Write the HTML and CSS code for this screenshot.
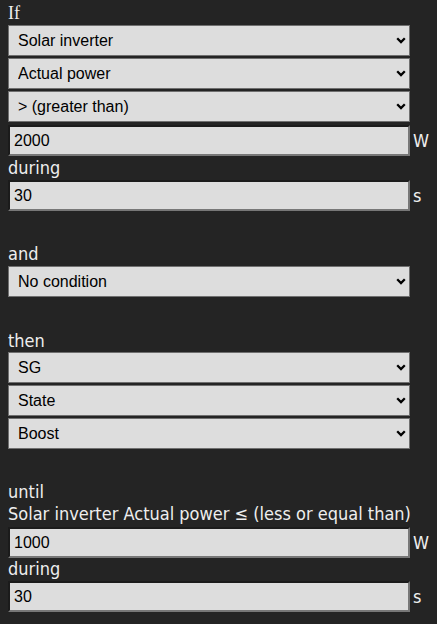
FILE: index.html
```html
<!DOCTYPE html>
<html>
<head>
<meta charset="utf-8">
<link rel="stylesheet" href="styles.css">
</head>
<body>
<div class="page">
  <div class="title">If</div>
  <div class="sel"><select><option>Solar inverter</option></select><svg class="chev" width="10" height="7" viewBox="0 0 10 7"><path d="M1.2 1.2 L5 5 L8.8 1.2" fill="none" stroke="#000" stroke-width="2.3"/></svg></div>
  <div class="sel"><select><option>Actual power</option></select><svg class="chev" width="10" height="7" viewBox="0 0 10 7"><path d="M1.2 1.2 L5 5 L8.8 1.2" fill="none" stroke="#000" stroke-width="2.3"/></svg></div>
  <div class="sel last"><select><option>&gt; (greater than)</option></select><svg class="chev" width="10" height="7" viewBox="0 0 10 7"><path d="M1.2 1.2 L5 5 L8.8 1.2" fill="none" stroke="#000" stroke-width="2.3"/></svg></div>
  <div class="row"><input type="text" value="2000"><span class="unit">W</span></div>
  <div class="label">during</div>
  <div class="row"><input type="text" value="30"><span class="unit">s</span></div>

  <div class="spacer"></div>
  <div class="label top0">and</div>
  <div class="sel"><select><option>No condition</option></select><svg class="chev" width="10" height="7" viewBox="0 0 10 7"><path d="M1.2 1.2 L5 5 L8.8 1.2" fill="none" stroke="#000" stroke-width="2.3"/></svg></div>

  <div class="spacer s2"></div>
  <div class="label tight">then</div>
  <div class="sel"><select><option>SG</option></select><svg class="chev" width="10" height="7" viewBox="0 0 10 7"><path d="M1.2 1.2 L5 5 L8.8 1.2" fill="none" stroke="#000" stroke-width="2.3"/></svg></div>
  <div class="sel"><select><option>State</option></select><svg class="chev" width="10" height="7" viewBox="0 0 10 7"><path d="M1.2 1.2 L5 5 L8.8 1.2" fill="none" stroke="#000" stroke-width="2.3"/></svg></div>
  <div class="sel"><select><option>Boost</option></select><svg class="chev" width="10" height="7" viewBox="0 0 10 7"><path d="M1.2 1.2 L5 5 L8.8 1.2" fill="none" stroke="#000" stroke-width="2.3"/></svg></div>

  <div class="spacer s3"></div>
  <div class="label tight">until</div>
  <div class="label gap2">Solar inverter Actual power ≤ (less or equal than)</div>
  <div class="row"><input type="text" value="1000"><span class="unit">W</span></div>
  <div class="label top0">during</div>
  <div class="row"><input type="text" value="30"><span class="unit">s</span></div>
</div>
</body>
</html>
```
FILE: styles.css
```css
html, body {
  margin: 0;
  padding: 0;
  background: #242424;
}
.page {
  padding: 2px 8px 0 8px;
  display: flex;
  flex-direction: column;
  align-items: flex-start;
}
.title {
  font-family: "Liberation Serif", serif;
  font-size: 18px;
  line-height: 22px;
  height: 22px;
  color: #eeeeee;
  margin-bottom: 1px;
}
.label {
  font-family: "DejaVu Sans Condensed", "DejaVu Sans", sans-serif;
  font-stretch: condensed;
  font-size: 18px;
  line-height: 22px;
  height: 22px;
  overflow: visible;
  color: #eeeeee;
  margin-top: 1px;
  margin-bottom: 1px;
  white-space: nowrap;
}
.label.tight {
  margin-top: 0;
  margin-bottom: 0;
}
.label.gap2 {
  margin-top: 0;
  margin-bottom: 2px;
}
.label.top0 {
  margin-top: 0;
}
.sel {
  position: relative;
  width: 402px;
  height: 31px;
  flex: 0 0 31px;
  margin-bottom: 2px;
}
.sel.last {
  margin-bottom: 3px;
}
.sel select {
  display: block;
  -webkit-appearance: none;
  appearance: none;
  box-sizing: border-box;
  width: 402px;
  height: 31px;
  margin: 0;
  border: 1px solid #6f6f6f;
  border-radius: 0;
  background: #dddddd;
  color: #000;
  font-family: "Liberation Sans", Arial, sans-serif;
  font-size: 16px;
  padding: 0 24px 0 9px;
  outline: none;
}
.chev {
  position: absolute;
  right: 4px;
  top: 12px;
  pointer-events: none;
}
.row {
  display: flex;
  align-items: center;
  height: 31px;
  flex: 0 0 31px;
}
.row input {
  box-sizing: border-box;
  width: 402px;
  height: 31px;
  margin: 0;
  border-style: solid;
  border-width: 2px;
  border-color: #1b1b1b #777777 #777777 #1b1b1b;
  background: #dddddd;
  color: #000;
  font-family: "Liberation Sans", Arial, sans-serif;
  font-size: 16px;
  padding: 0 4px;
  outline: none;
}
.unit {
  font-family: "DejaVu Sans Condensed", "DejaVu Sans", sans-serif;
  font-stretch: condensed;
  font-size: 18px;
  line-height: 22px;
  color: #eeeeee;
  margin-left: 3px;
}
.spacer {
  height: 32px;
  flex: 0 0 32px;
}
.spacer.s2 {
  height: 31px;
  flex: 0 0 31px;
}
.spacer.s3 {
  height: 30px;
  flex: 0 0 30px;
}
```
